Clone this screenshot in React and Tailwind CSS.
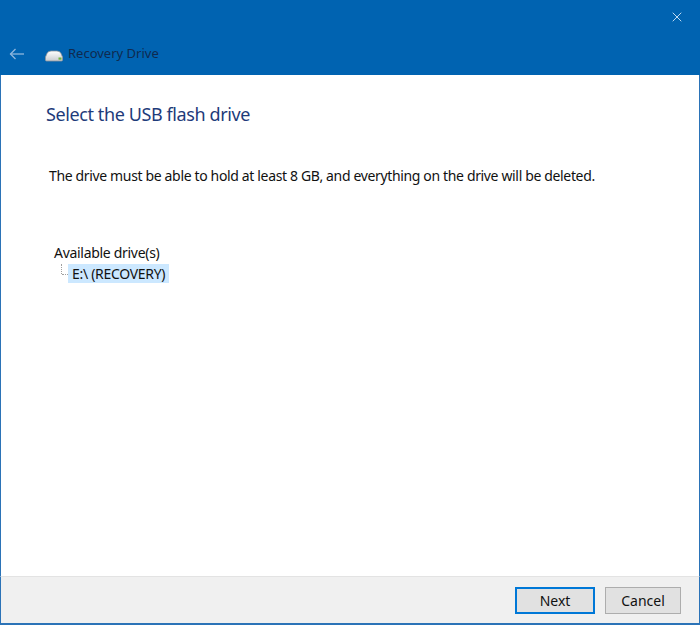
import { X } from "lucide-react";

const font = { fontFamily: '"Noto Sans", "Open Sans", sans-serif' };

function DriveIcon() {
  return (
    <svg width="20" height="12" viewBox="0 0 20 12">
      <defs>
        <linearGradient id="drv" x1="0" y1="0" x2="0" y2="1">
          <stop offset="0" stopColor="#ffffff" />
          <stop offset="1" stopColor="#c9ccd0" />
        </linearGradient>
      </defs>
      <path d="M3 3.5 Q4 1 7 1 H13 Q16 1 17 3.5 L18.5 7 V10 Q18.5 11 17.5 11 H2.5 Q1.5 11 1.5 10 V7 Z" fill="url(#drv)" stroke="#8f959b" strokeWidth="0.8" />
      <rect x="14.5" y="7.5" width="3" height="2.2" fill="#6fb43f" />
    </svg>
  );
}

function BackArrow() {
  return (
    <svg width="16" height="12" viewBox="0 0 16 12" fill="none" stroke="#8fb6dd" strokeWidth="1.3">
      <path d="M15 6 H1.5" />
      <path d="M6.5 1 L1.5 6 L6.5 11" />
    </svg>
  );
}

export default function App() {
  return (
    <div className="w-[700px] h-[625px] flex flex-col bg-white overflow-hidden" style={font}>
      {/* Title bar */}
      <div className="h-[75px] bg-[#0063b1] flex flex-col shrink-0">
        <div className="h-[34px] flex justify-end items-center pr-[15px]">
          <X size={16} strokeWidth={1.4} className="text-[#cfe3f5]" />
        </div>
        <div className="flex items-center h-[38px]">
          <span className="ml-[9px] mt-[1px] w-[20px]"><BackArrow /></span>
          <span className="ml-[15px] mt-[5px]"><DriveIcon /></span>
          <span className="ml-[4px] mt-[2px] text-[13px] text-[#0f2a4f]">Recovery Drive</span>
        </div>
      </div>

      {/* Content */}
      <div className="flex-1 flex flex-col border-l border-r border-[#2b73b7]">
        <div className="pl-[45px] pt-[26px]">
          <h1 className="text-[18px] tracking-[-0.4px] text-[#1e3b7a] leading-[26px]">Select the USB flash drive</h1>
        </div>
        <p className="pl-[48px] mt-[39px] text-[14px] tracking-[-0.35px] text-[#111] leading-[20px]">
          The drive must be able to hold at least 8 GB, and everything on the drive will be deleted.
        </p>
        <div className="pl-[53px] mt-[57px] text-[14px] tracking-[-0.3px] text-[#111]">
          <div className="leading-[20px]">Available drive(s)</div>
          <div className="flex items-center h-[19px] mt-[1px]">
            <div className="relative w-[14px] h-full">
              <div className="absolute left-[7px] top-0 h-[10px] border-l border-dotted border-[#a0a0a0]" />
              <div className="absolute left-[8px] top-[10px] w-[6px] border-t border-dotted border-[#a0a0a0]" />
            </div>
            <div className="bg-[#cce8ff] px-[4px] h-full flex items-center text-[14px]">E:\ (RECOVERY)</div>
          </div>
        </div>
      </div>

      {/* Footer */}
      <div className="h-[49px] shrink-0 bg-[#f0f0f0] border-t border-[#e3e3e3] border-l border-r border-b-2 border-l-[#2b73b7] border-r-[#2b73b7] border-b-[#2b73b7] flex items-center justify-end gap-[10px] pr-[18px]">
        <button className="w-[80px] h-[27px] bg-[#e1e1e1] border-2 border-[#0078d7] text-[14px] text-[#111]">Next</button>
        <button className="w-[76px] h-[27px] bg-[#e1e1e1] border border-[#adadad] text-[14px] text-[#111]">Cancel</button>
      </div>
    </div>
  );
}
